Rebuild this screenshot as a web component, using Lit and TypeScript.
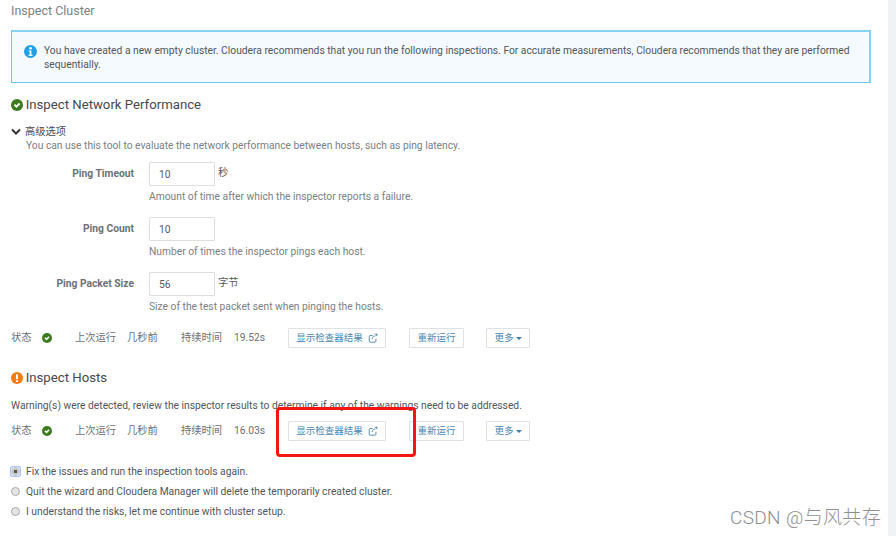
import { LitElement, html, css } from "lit";
import { customElement } from "lit/decorators.js";

const okIcon = (size: number) => html`<svg class="ico" width=${size} height=${size} viewBox="0 0 24 24"><circle cx="12" cy="12" r="12" fill="#3c7a1e"/><path d="M5.6 12.6l2.6-2.6 2.7 2.7 5-5 2.6 2.6-7.6 7.6z" fill="#fff"/></svg>`;
const extIcon = html`<svg class="ext" width="10" height="10" viewBox="0 0 12 12" fill="none" stroke="#4d87ae" stroke-width="1.1"><path d="M9.5 7v3a1 1 0 0 1-1 1h-6a1 1 0 0 1-1-1V4a1 1 0 0 1 1-1h3"/><path d="M4.8 7.4C5.3 5 7 3.4 9 3.4"/><path d="M8 .9h3.2v3.2z" fill="#4d87ae" stroke="none"/></svg>`;

@customElement("app-root")
export class AppRoot extends LitElement {
  static styles = css`
    :host { display: block; width: 896px; height: 536px; position: relative; overflow: hidden; background: #fff;
      font-family: Roboto, "Noto Sans CJK SC", sans-serif; font-size: 10.27px; color: #4f5257; }
    .scroll { position: absolute; right: 0; top: 0; bottom: 0; width: 8px; background: #f0f2f5; }
    .page { padding: 3px 0 0 11px; width: 860px; }
    .title { font-size: 12.5px; line-height: 15px; color: #7a7f85; }
    .alert { margin-top: 12px; height: 53px; box-sizing: border-box; border: 1px solid #6cc5e8; border-top: 2px solid #88d3f0; border-right: 2px solid #88d3f0;
      background: #f5fafe; display: flex; padding: 12px 0 0 11.5px; gap: 7.5px; line-height: 14px; color: #52565c; }
    .alert svg { flex: none; margin-top: 1px; }
    .alert .t { width: 812px; }
    h3 { margin: 0; font-weight: 400; font-size: 13.2px; line-height: 16px; color: #45494e; display: flex; align-items: center; gap: 2.7px; }
    .h1 { margin-top: 14px; }
    .adv { margin-top: 12px; display: flex; align-items: center; gap: 4px; line-height: 13px; color: #45494e; }
    .desc { margin: 1px 0 0 15px; line-height: 14px; color: #7a7f85; }
    .field { display: grid; grid-template-columns: 123px auto; column-gap: 15px; }
    .f1 { margin-top: 9px; }
    .f2, .f3 { margin-top: 13px; }
    .lbl { text-align: right; font-weight: 700; color: #6d7177; line-height: 14px; margin-top: 5px; }
    .input-row { display: flex; gap: 3px; align-items: flex-start; line-height: 14px; color: #55595e; }
    .input { width: 66px; height: 24px; box-sizing: border-box; border: 1px solid #dcdfe2; padding-left: 9px; line-height: 23px; color: #55595e; background: #fff; border-radius: 1px; }
    .unit { margin-top: 4px; }
    .help { grid-column: 2; margin-top: 3px; line-height: 15px; color: #7a7f85; }
    .status { display: flex; align-items: center; height: 20px; color: #6b6f75; line-height: 14px; }
    .s1 { margin-top: 14px; }
    .s2 { margin-top: 8px; }
    .st { width: 31px; }
    .w1 { width: 52px; margin-left: 23px; }
    .w2 { width: 54px; }
    .dur { width: 53px; }
    .val { width: 54px; }
    .btn { box-sizing: border-box; height: 20px; border: 1px solid #dfe2e5; background: #fff; color: #4d87ae; font-size: 9.5px; display: flex; align-items: center; justify-content: center; gap: 5px; border-radius: 1px; }
    .b1 { width: 98px; }
    .b2 { width: 55px; margin-left: 23px; }
    .b3 { width: 44px; margin-left: 22px; }
    .caret { width: 0; height: 0; border: 3px solid transparent; border-top: 3px solid #3f7da8; border-bottom: 0; margin-left: -3px; }
    .h2 { margin-top: 22px; }
    .warn { margin-top: 13px; line-height: 14px; color: #52565c; }
    .radios { margin-top: 23px; color: #52565c; }
    .radio { display: flex; align-items: center; gap: 6px; height: 14px; margin-bottom: 6.2px; }
    .dot { width: 9px; height: 9px; box-sizing: border-box; border-radius: 50%; border: 1px solid #a9a9a9; background: #e4e4e4; flex: none; }
    .sel { border: 0; border-radius: 1px; outline: 1px solid #a9c5f2; background: radial-gradient(circle, #555 0 1.6px, #c9c9c9 2px 4px, #d6e3f8 4.4px); }
    .red { position: absolute; left: 276px; top: 407px; width: 140px; height: 50px; box-sizing: border-box; border: 3px solid #f6150f; border-radius: 4px; }
    .mark { position: absolute; left: 730px; top: 507px; font-size: 19px; line-height: 22px; font-weight: 300; color: #8f8f8f; font-family: Roboto, "Noto Sans CJK SC", sans-serif; white-space: nowrap; letter-spacing: .35px; }
  `;

  private statusRow(cls: string, val: string) {
    return html`<div class="status ${cls}">
      <span class="st">状态</span>${okIcon(10)}
      <span class="w1">上次运行</span><span class="w2">几秒前</span>
      <span class="dur">持续时间</span><span class="val">${val}</span>
      <div class="btn b1">显示检查器结果 ${extIcon}</div>
      <div class="btn b2">重新运行</div>
      <div class="btn b3">更多 <span class="caret"></span></div>
    </div>`;
  }

  private field(cls: string, label: string, value: string, unit: string, help: string) {
    return html`<div class="field ${cls}">
      <div class="lbl">${label}</div>
      <div class="input-row"><div class="input">${value}</div><span class="unit">${unit}</span></div>
      <div class="help">${help}</div>
    </div>`;
  }

  render() {
    return html`
      <div class="scroll"></div>
      <div class="page">
        <div class="title">Inspect Cluster</div>
        <div class="alert">
          <svg width="13" height="13" viewBox="0 0 24 24"><circle cx="12" cy="12" r="12" fill="#1ea0e6"/><circle cx="12" cy="6" r="2.4" fill="#fff"/><path d="M8.5 10h5.2v8h2v2.2H8.5V18h2v-5.8h-2z" fill="#fff"/></svg>
          <div class="t">You have created a new empty cluster. Cloudera recommends that you run the following inspections. For accurate measurements, Cloudera recommends that they are performed sequentially.</div>
        </div>
        <h3 class="h1">${okIcon(12)}Inspect Network Performance</h3>
        <div class="adv">
          <svg width="10" height="8" viewBox="0 0 10 8" fill="none" stroke="#2f3236" stroke-width="2"><path d="M1 1.5l4 4 4-4"/></svg>
          <span>高级选项</span>
        </div>
        <div class="desc">You can use this tool to evaluate the network performance between hosts, such as ping latency.</div>
        ${this.field("f1", "Ping Timeout", "10", "秒", "Amount of time after which the inspector reports a failure.")}
        ${this.field("f2", "Ping Count", "10", "", "Number of times the inspector pings each host.")}
        ${this.field("f3", "Ping Packet Size", "56", "字节", "Size of the test packet sent when pinging the hosts.")}
        ${this.statusRow("s1", "19.52s")}
        <h3 class="h2"><svg class="ico" width="12" height="12" viewBox="0 0 24 24"><circle cx="12" cy="12" r="12" fill="#f57c12"/><rect x="10" y="4.5" width="4" height="10" rx="1" fill="#fff"/><rect x="10" y="16.3" width="4" height="3.6" rx="1" fill="#fff"/></svg>Inspect Hosts</h3>
        <div class="warn">Warning(s) were detected, review the inspector results to determine if any of the warnings need to be addressed.</div>
        ${this.statusRow("s2", "16.03s")}
        <div class="radios">
          <div class="radio"><span class="dot sel"></span>Fix the issues and run the inspection tools again.</div>
          <div class="radio"><span class="dot"></span>Quit the wizard and Cloudera Manager will delete the temporarily created cluster.</div>
          <div class="radio"><span class="dot"></span>I understand the risks, let me continue with cluster setup.</div>
        </div>
      </div>
      <div class="red"></div>
      <div class="mark">CSDN @与风共存</div>
    `;
  }
}
